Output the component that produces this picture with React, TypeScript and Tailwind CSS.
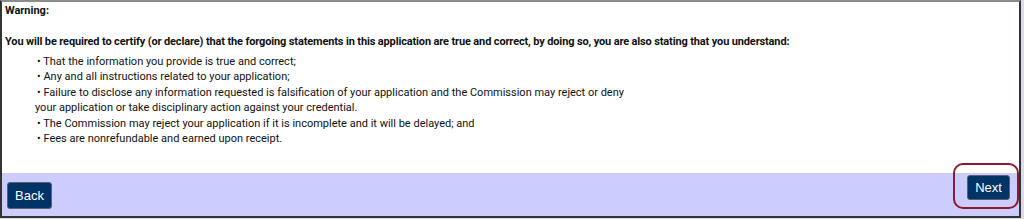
const bullets = [
  "• That the information you provide is true and correct;",
  "• Any and all instructions related to your application;",
  "• Failure to disclose any information requested is falsification of your application and the Commission may reject or deny",
];

export default function App() {
  return (
    <div className="h-[219px] w-[1024px] bg-[#dcdce8]">
      <div className="relative flex h-[218px] w-[1021px] flex-col border-2 border-[#333] border-t-[#8c8c8c] bg-white font-['Roboto',sans-serif] text-[11px] text-[#111]">
        <div className="flex-1 pl-[3px] pt-[1px] leading-[15.5px]">
          <div className="font-bold">Warning:</div>
          <div className="mt-[15.5px] font-bold tracking-[-0.14px]">
            You will be required to certify (or declare) that the forgoing statements in this application are true and
            correct, by doing so, you are also stating that you understand:
          </div>
          <div className="mt-[4px] pl-[30px]">
            {bullets.map((b) => (
              <div key={b} className="pl-[2px]">{b}</div>
            ))}
            <div>your application or take disciplinary action against your credential.</div>
            <div className="pl-[2px]">• The Commission may reject your application if it is incomplete and it will be delayed; and</div>
            <div className="pl-[2px]">• Fees are nonrefundable and earned upon receipt.</div>
          </div>
        </div>
        <div className="flex h-[43px] justify-between bg-[#ccccff]">
          <button className="mb-[7px] ml-[5px] mt-[9px] h-[27px] w-[45px] self-end rounded-[3px] border border-[#5a6070] bg-[#003366] font-['Liberation_Sans',sans-serif] text-[13px] text-white">
            Back
          </button>
          <button className="mr-[9px] mt-[2px] h-[25px] w-[43px] self-start rounded-[3px] border border-[#5a6070] bg-[#003366] font-['Liberation_Sans',sans-serif] text-[13px] text-white">
            Next
          </button>
        </div>
        <div className="pointer-events-none absolute left-[951px] top-[161px] h-[46px] w-[66px] rounded-[10px] border-2 border-[#8b1a2e]" />
      </div>
    </div>
  );
}
